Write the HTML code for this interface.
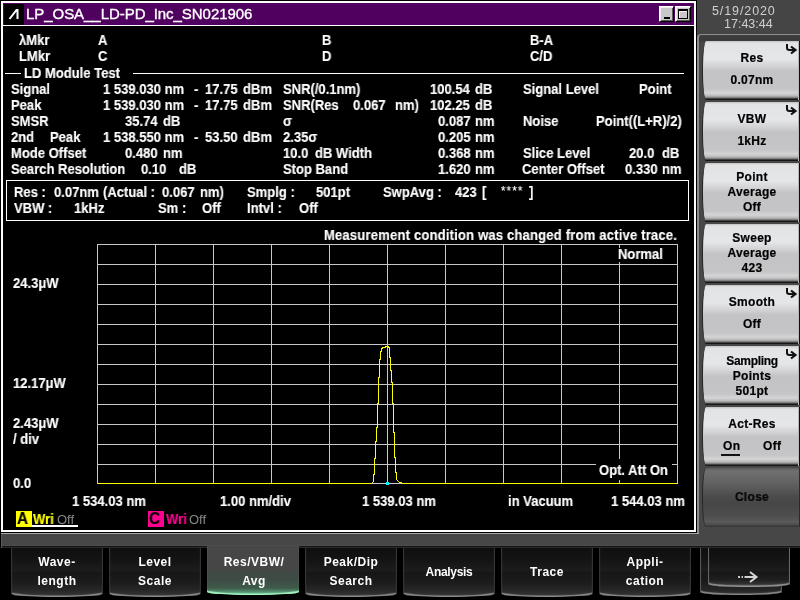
<!DOCTYPE html>
<html><head><meta charset="utf-8">
<style>
*{margin:0;padding:0;box-sizing:border-box}
html,body{width:800px;height:600px;overflow:hidden;background:#000}
body{position:relative;font-family:"Liberation Sans",sans-serif;color:#fff}
.a{position:absolute}
.a,.l,#ttext{will-change:transform}
.t{position:absolute;will-change:transform;font-weight:bold;font-size:14px;line-height:14px;white-space:pre;color:#fff;transform:scaleX(0.93);transform-origin:0 0;-webkit-text-stroke:0.15px currentColor}
#frame{position:absolute;left:697px;top:0;width:103px;height:547px;background:#454545}
#band{position:absolute;left:1px;top:533px;width:700px;height:14px;background:#454545;border-top:1px solid #8a8a8a;border-radius:3px 0 0 0}
#main{position:absolute;left:1px;top:1px;width:695px;height:531px;border:2px solid #fff;background:#000}
#title{position:absolute;left:3px;top:3px;width:691px;height:22px;background:#50005f}
#tline{position:absolute;left:3px;top:25px;width:691px;height:1px;background:#fff}
#logo{position:absolute;left:4px;top:4px;width:20px;height:21px;background:#000}
#ttext{position:absolute;left:26px;top:5px;font-size:15px;line-height:18px;color:#fff;white-space:pre;-webkit-text-stroke:0.35px #fff;letter-spacing:-0.05px}
.wb{position:absolute;top:6px;width:15px;height:16px;background:#c8c8c8;border-top:1px solid #fff;border-left:1px solid #fff;border-right:1px solid #000;border-bottom:1px solid #000;box-shadow:inset 1px 1px 0 #ececec,inset -1px -1px 0 #5a5a5a}

.sk{position:absolute;left:702px;width:98px;height:59px;border-radius:4px 0 0 4px/29px 0 0 29px;border-left:1px solid #262626;
background:linear-gradient(to bottom,#c0c0c0 0px,#e2e3e5 2px,#e5e6e8 18px,#d0d0d2 26px,#c3c3c5 30px,#c5c5c7 48px,#d5d5d7 52px,#b8b8b8 55px,#707070 57px,#161616 58px,#161616 59px);
border-right:1px solid #101010;box-shadow:inset -1px 0 0 #b8b8b8}
.sk .l{position:absolute;left:1px;width:96px;text-align:center;font-weight:bold;font-size:12px;line-height:12px;color:#000;white-space:pre;letter-spacing:0.3px;-webkit-text-stroke:0.2px #000}
.arr{position:absolute;left:83px;top:3px}
.fk{position:absolute;top:548px;width:92px;height:49px;border-radius:0 0 46px 46px/0 0 3px 3px;
background:linear-gradient(to bottom,#0f0f0f 0px,#141414 12px,#1d1d1d 23px,#161616 24px,#1b1b1b 34px,#262626 42px,#303030 46px,#3a3a3a 49px);
border-left:1px solid #333;border-right:1px solid #333;box-shadow:inset 0 -2px 1px -0.5px rgba(170,170,170,0.75)}
.fk .l{position:absolute;left:0;width:90px;text-align:center;font-weight:bold;font-size:12px;line-height:12px;color:#fff;white-space:pre;letter-spacing:0.5px}
.l2{font-weight:bold;font-size:12px;line-height:12px;color:#000;white-space:pre;letter-spacing:0.3px;-webkit-text-stroke:0.2px #000}
</style></head><body>
<div id="frame"></div>
<div id="band"></div>
<div id="main"></div>
<div id="title"></div>
<div id="tline"></div>
<div id="logo"><svg width="20" height="21" style="position:absolute;left:0;top:0"><path d="M5.5 15 L12.5 6 L13.5 6 L13.5 15" stroke="#fff" stroke-width="2" fill="none"/></svg></div>
<div id="ttext">LP_OSA__LD-PD_Inc_SN021906</div>
<div class="wb" style="left:659px"><div class="a" style="left:4px;top:10px;width:6px;height:2px;background:#000"></div></div>
<div class="wb" style="left:675px;width:16px"><div class="a" style="left:2px;top:2px;width:10px;height:10px;border:1px solid #000;border-top-width:2px;background:#c8c8c8;box-shadow:inset 1px 1px 0 #f0f0f0"></div></div>

<!-- header rows -->
<div class="t" style="left:19px;top:33px">λMkr</div>
<div class="t" style="left:98px;top:33px">A</div>
<div class="t" style="left:322px;top:33px">B</div>
<div class="t" style="left:530px;top:33px">B-A</div>
<div class="t" style="left:19px;top:49px">LMkr</div>
<div class="t" style="left:98px;top:49px">C</div>
<div class="t" style="left:322px;top:49px">D</div>
<div class="t" style="left:530px;top:49px">C/D</div>

<div class="a" style="left:5px;top:73px;width:16px;height:1px;background:#fff"></div>
<div class="t" style="left:24px;top:66px">LD Module Test</div>
<div class="a" style="left:133px;top:73px;width:551px;height:1px;background:#fff"></div>

<!-- data rows -->
<div class="t" style="left:11px;top:82px">Signal</div>
<div class="t" style="left:103px;top:82px">1 539.030 nm</div>
<div class="t" style="left:194px;top:82px">-</div>
<div class="t" style="left:205px;top:82px">17.75</div>
<div class="t" style="left:243px;top:82px">dBm</div>
<div class="t" style="left:283px;top:82px">SNR(/0.1nm)</div>
<div class="t" style="left:430px;top:82px">100.54</div>
<div class="t" style="left:475px;top:82px">dB</div>
<div class="t" style="left:523px;top:82px">Signal Level</div>
<div class="t" style="left:639px;top:82px">Point</div>

<div class="t" style="left:11px;top:98px">Peak</div>
<div class="t" style="left:103px;top:98px">1 539.030 nm</div>
<div class="t" style="left:194px;top:98px">-</div>
<div class="t" style="left:205px;top:98px">17.75</div>
<div class="t" style="left:243px;top:98px">dBm</div>
<div class="t" style="left:283px;top:98px">SNR(Res</div>
<div class="t" style="left:353px;top:98px">0.067</div>
<div class="t" style="left:395px;top:98px">nm)</div>
<div class="t" style="left:430px;top:98px">102.25</div>
<div class="t" style="left:475px;top:98px">dB</div>

<div class="t" style="left:11px;top:114px">SMSR</div>
<div class="t" style="left:125px;top:114px">35.74</div>
<div class="t" style="left:163px;top:114px">dB</div>
<div class="t" style="left:283px;top:114px">σ</div>
<div class="t" style="left:438px;top:114px">0.087</div>
<div class="t" style="left:475px;top:114px">nm</div>
<div class="t" style="left:523px;top:114px">Noise</div>
<div class="t" style="left:596px;top:114px">Point((L+R)/2)</div>

<div class="t" style="left:11px;top:130px">2nd</div>
<div class="t" style="left:50px;top:130px">Peak</div>
<div class="t" style="left:103px;top:130px">1 538.550 nm</div>
<div class="t" style="left:194px;top:130px">-</div>
<div class="t" style="left:205px;top:130px">53.50</div>
<div class="t" style="left:243px;top:130px">dBm</div>
<div class="t" style="left:283px;top:130px">2.35σ</div>
<div class="t" style="left:438px;top:130px">0.205</div>
<div class="t" style="left:475px;top:130px">nm</div>

<div class="t" style="left:11px;top:146px">Mode Offset</div>
<div class="t" style="left:125px;top:146px">0.480</div>
<div class="t" style="left:163px;top:146px">nm</div>
<div class="t" style="left:283px;top:146px">10.0</div>
<div class="t" style="left:315px;top:146px">dB Width</div>
<div class="t" style="left:438px;top:146px">0.368</div>
<div class="t" style="left:475px;top:146px">nm</div>
<div class="t" style="left:523px;top:146px">Slice Level</div>
<div class="t" style="left:629px;top:146px">20.0</div>
<div class="t" style="left:662px;top:146px">dB</div>

<div class="t" style="left:11px;top:162px">Search Resolution</div>
<div class="t" style="left:141px;top:162px">0.10</div>
<div class="t" style="left:179px;top:162px">dB</div>
<div class="t" style="left:283px;top:162px">Stop Band</div>
<div class="t" style="left:438px;top:162px">1.620</div>
<div class="t" style="left:475px;top:162px">nm</div>
<div class="t" style="left:522px;top:162px">Center Offset</div>
<div class="t" style="left:625px;top:162px">0.330</div>
<div class="t" style="left:662px;top:162px">nm</div>

<!-- res box -->
<div class="a" style="left:6px;top:180px;width:683px;height:41px;border:1px solid #fff"></div>
<div class="t" style="left:14px;top:185px">Res :</div>
<div class="t" style="left:54px;top:185px">0.07nm</div>
<div class="t" style="left:103px;top:185px">(Actual :</div>
<div class="t" style="left:162px;top:185px">0.067</div>
<div class="t" style="left:200px;top:185px">nm)</div>
<div class="t" style="left:247px;top:185px">Smplg :</div>
<div class="t" style="left:316px;top:185px">501pt</div>
<div class="t" style="left:383px;top:185px">SwpAvg :</div>
<div class="t" style="left:455px;top:185px">423</div>
<div class="t" style="left:482px;top:185px">[</div>
<div class="t" style="left:501px;top:184px;font-size:12px;letter-spacing:1.4px;font-weight:normal">****</div>
<div class="t" style="left:529px;top:185px">]</div>
<div class="t" style="left:14px;top:201px">VBW :</div>
<div class="t" style="left:74px;top:201px">1kHz</div>
<div class="t" style="left:158px;top:201px">Sm :</div>
<div class="t" style="left:202px;top:201px">Off</div>
<div class="t" style="left:247px;top:201px">Intvl :</div>
<div class="t" style="left:299px;top:201px">Off</div>

<!-- plot -->
<div class="t" style="left:324px;top:228px;letter-spacing:0.21px">Measurement condition was changed from active trace.</div>
<svg class="a" style="left:0;top:0" width="697" height="532" shape-rendering="crispEdges">
<g stroke="#c8c8c8" stroke-width="1" fill="none">
<path d="M97.5 244 V484 M155.5 244 V484 M213.5 244 V484 M271.5 244 V484 M329.5 244 V484 M387.5 244 V484 M445.5 244 V484 M503.5 244 V484 M561.5 244 V484 M619.5 244 V484 M677.5 244 V484"/>
<path d="M97 244.5 H678 M97 264.5 H678 M97 284.5 H678 M97 304.5 H678 M97 324.5 H678 M97 344.5 H678 M97 364.5 H678 M97 384.5 H678 M97 404.5 H678 M97 424.5 H678 M97 444.5 H678 M97 464.5 H678 M97 483.5 H678"/>
</g>
<rect x="596" y="459" width="76" height="21" fill="#000"/>
<rect x="614" y="248" width="52" height="14" fill="#000"/>
<polyline fill="none" stroke="#ffff00" stroke-width="1" points="97.5,483.5 371.5,483.5 372.5,482.5 373.5,481.5 373.5,474.5 374.5,474.5 374.5,458.5 375.5,458.5 375.5,441.5 376.5,441.5 376.5,427.5 377.5,427.5 377.5,403.5 378.5,403.5 378.5,377.5 379.5,377.5 379.5,359.5 380.5,359.5 380.5,351.5 381.5,351.5 381.5,348.5 382.5,348.5 382.5,347.5 385.5,347.5 385.5,346.5 388.5,346.5 388.5,347.5 389.5,347.5 389.5,357.5 390.5,357.5 390.5,370.5 391.5,370.5 391.5,382.5 392.5,382.5 392.5,403.5 393.5,403.5 393.5,432.5 394.5,432.5 394.5,457.5 395.5,457.5 395.5,472.5 396.5,472.5 396.5,479.5 397.5,480.5 398.5,481.5 399.5,482.5 401.5,482.5 402.5,483.5 677.5,483.5"/>
<rect x="386" y="482" width="3" height="3" fill="#00ffff"/><rect x="387" y="483" width="1" height="1" fill="#d08080"/>
</svg>
<div class="t" style="left:618px;top:247px">Normal</div>
<div class="t" style="left:599px;top:463px">Opt. Att On</div>
<div class="t" style="left:13px;top:276px">24.3μW</div>
<div class="t" style="left:13px;top:376px">12.17μW</div>
<div class="t" style="left:13px;top:416px">2.43μW</div>
<div class="t" style="left:13px;top:432px">/ div</div>
<div class="t" style="left:13px;top:476px">0.0</div>
<div class="t" style="left:72px;top:494px">1 534.03 nm</div>
<div class="t" style="left:220px;top:494px">1.00 nm/div</div>
<div class="t" style="left:362px;top:494px">1 539.03 nm</div>
<div class="t" style="left:508px;top:494px">in Vacuum</div>
<div class="t" style="left:611px;top:494px">1 544.03 nm</div>

<!-- trace labels -->
<div class="a" style="left:16px;top:511px;width:16px;height:16px;background:#ffff00"></div>
<div class="t" style="left:17px;top:510px;color:#000;font-size:16.5px;line-height:16px">A</div>
<div class="t" style="left:33px;top:512px;color:#ffff00">Wri</div>
<div class="a" style="left:57px;top:513px;font-size:13px;line-height:13px;color:#888">Off</div>
<div class="a" style="left:32px;top:525px;width:46px;height:2px;background:#fff"></div>
<div class="a" style="left:148px;top:511px;width:16px;height:16px;background:#ff0090"></div>
<div class="t" style="left:149px;top:510px;color:#000;font-size:16.5px;line-height:16px">C</div>
<div class="t" style="left:166px;top:512px;color:#ff0090">Wri</div>
<div class="a" style="left:189px;top:513px;font-size:13px;line-height:13px;color:#888">Off</div>


<div class="a" style="left:697px;top:34px;width:104px;height:500px;border-left:2px solid #8c8c8c;border-top:1px solid #8c8c8c;border-radius:4px 0 0 0;background:linear-gradient(to bottom,#3e3e3e 0px,#3a3a3a 5px,#474747 8px,#474747 100%)"></div>
<div class="a" style="left:1px;top:533px;width:698px;height:1px;background:#a8a8a8"></div>
<div class="a" style="left:1px;top:534px;width:800px;height:14px;background:linear-gradient(to bottom,#474747 0px,#474747 11px,#4c4c4c 11px,#4c4c4c 12px,#161616 12px,#161616 13px,#2a2a2a 13px,#2a2a2a 14px);border-left:1px solid #5a5a5a"></div>
<div class="a" style="left:712px;top:5px;font-size:12.5px;line-height:13px;color:#d0d0d0;white-space:pre;letter-spacing:0.9px">5/19/2020</div>
<div class="a" style="left:724px;top:18px;font-size:12.5px;line-height:13px;color:#d0d0d0;white-space:pre;letter-spacing:0px">17:43:44</div>
<div class="sk" style="top:41px"><svg class="arr" width="13" height="13"><path d="M1 0 V4 Q1 6 3.5 6 H8" stroke="#111" stroke-width="2" fill="none"/><path d="M5 2.5 L9.5 6 L5 9.5" stroke="#111" stroke-width="2.2" fill="none" stroke-linejoin="miter"/></svg><div class="l" style="top:11px">Res</div><div class="l" style="top:33px">0.07nm</div></div>
<div class="sk" style="top:102px"><svg class="arr" width="13" height="13"><path d="M1 0 V4 Q1 6 3.5 6 H8" stroke="#111" stroke-width="2" fill="none"/><path d="M5 2.5 L9.5 6 L5 9.5" stroke="#111" stroke-width="2.2" fill="none" stroke-linejoin="miter"/></svg><div class="l" style="top:11px">VBW</div><div class="l" style="top:33px">1kHz</div></div>
<div class="sk" style="top:163px"><div class="l" style="top:8px">Point</div><div class="l" style="top:23px">Average</div><div class="l" style="top:38px">Off</div></div>
<div class="sk" style="top:224px"><div class="l" style="top:8px">Sweep</div><div class="l" style="top:23px">Average</div><div class="l" style="top:38px">423</div></div>
<div class="sk" style="top:285px"><svg class="arr" width="13" height="13"><path d="M1 0 V4 Q1 6 3.5 6 H8" stroke="#111" stroke-width="2" fill="none"/><path d="M5 2.5 L9.5 6 L5 9.5" stroke="#111" stroke-width="2.2" fill="none" stroke-linejoin="miter"/></svg><div class="l" style="top:11px">Smooth</div><div class="l" style="top:33px">Off</div></div>
<div class="sk" style="top:346px"><svg class="arr" width="13" height="13"><path d="M1 0 V4 Q1 6 3.5 6 H8" stroke="#111" stroke-width="2" fill="none"/><path d="M5 2.5 L9.5 6 L5 9.5" stroke="#111" stroke-width="2.2" fill="none" stroke-linejoin="miter"/></svg><div class="l" style="top:9px;letter-spacing:-0.3px">Sampling</div><div class="l" style="top:24px">Points</div><div class="l" style="top:39px">501pt</div></div>
<div class="sk" style="top:407px"><div class="l" style="top:11px">Act-Res</div><div class="a l2" style="top:33px;left:20px">On</div><div class="a l2" style="top:33px;left:60px">Off</div><div class="a" style="left:18px;top:47px;width:19px;height:2px;background:#111"></div></div>
<div class="sk" style="top:468px;background:linear-gradient(to bottom,#5a5a5a 0px,#707070 3px,#626262 15px,#4c4c4c 28px,#464646 36px,#4e4e4e 48px,#5a5a5a 54px,#4a4a4a 57px,#383838 58px,#383838 59px);border-right:1px solid #2a2a2a;box-shadow:none"><div class="l" style="top:23px;color:#0a0a0a">Close</div></div>

<div class="fk" style="left:11px"><div class="l" style="top:8px">Wave-</div><div class="l" style="top:27px">length</div></div>
<div class="fk" style="left:109px"><div class="l" style="top:8px">Level</div><div class="l" style="top:27px">Scale</div></div>
<div class="fk" style="left:207px;top:546px;height:49px;border:none;background:linear-gradient(to bottom,#474747 0px,#464646 24px,#404843 26px,#3d4c44 34px,#3e5a4a 42px,#4e8266 45px,#6ab890 48px,#70b890 49px);border-radius:0 0 46px 46px/0 0 3px 3px;box-shadow:inset 0 -2px 1px -0.5px rgba(170,255,200,0.9)"><div class="l" style="top:10px;left:2px">Res/VBW/</div><div class="l" style="top:29px;left:2px">Avg</div></div>
<div class="fk" style="left:305px"><div class="l" style="top:8px">Peak/Dip</div><div class="l" style="top:27px">Search</div></div>
<div class="fk" style="left:403px"><div class="l" style="top:18px;letter-spacing:-0.3px">Analysis</div></div>
<div class="fk" style="left:501px"><div class="l" style="top:18px">Trace</div></div>
<div class="fk" style="left:599px"><div class="l" style="top:8px">Appli-</div><div class="l" style="top:27px">cation</div></div>
<div class="fk" style="left:700px;width:82px;height:47px;border-left:1px solid #555;border-right:1px solid #555"></div>
<div class="fk" style="left:708px;width:82px;height:39px;border-left:1px solid #666;border-right:1px solid #666;background:linear-gradient(to bottom,#0f0f0f 0px,#141414 12px,#1d1d1d 23px,#161616 24px,#1f1f1f 32px,#333 36px,#6a6a6a 39px)"></div>
<svg class="a" style="left:736px;top:570px" width="24" height="14"><path d="M2 7 H4 M5.5 7 H7" stroke="#c8c8c8" stroke-width="2"/><path d="M8.5 7 H20" stroke="#d4d4d4" stroke-width="2"/><path d="M14 2 L20.5 7 L14 12" stroke="#d4d4d4" stroke-width="2" fill="none"/></svg>
</body></html>
